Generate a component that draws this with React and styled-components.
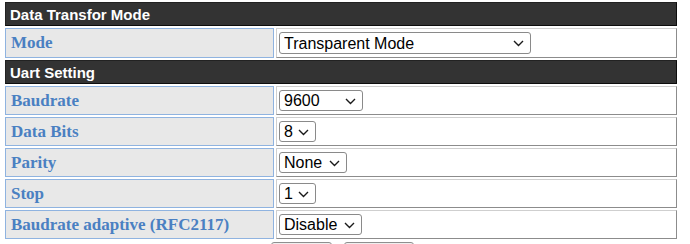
import React from 'react';
import styled, { createGlobalStyle } from 'styled-components';

const GlobalStyle = createGlobalStyle`
    html, body {
        margin: 0;
        padding: 0;
        background: #ffffff;
    }
`;

const Page = styled.div`
    padding: 2px 0 0 5px;
    width: 672px;
`;

const Grid = styled.div`
    display: grid;
    grid-template-columns: 269px 401px;
    gap: 2px;
`;

const Header = styled.div`
    grid-column: 1 / -1;
    box-sizing: border-box;
    height: 24px;
    display: flex;
    align-items: center;
    padding-left: 4px;
    background: #333333;
    border: 1px solid #222222;
    border-right-color: #0d0d0d;
    border-bottom-color: #0d0d0d;
    color: #ffffff;
    font-family: 'Liberation Sans', Arial, sans-serif;
    font-weight: bold;
    font-size: 15px;
`;

const Label = styled.div`
    box-sizing: border-box;
    height: ${(p) => p.$h}px;
    display: flex;
    align-items: center;
    padding-left: 5px;
    background: #e8e8e8;
    border: 1px solid #8fb3e0;
    color: #4a80c2;
    font-family: 'Liberation Serif', 'Times New Roman', serif;
    font-weight: bold;
    font-size: 17px;
`;

const Value = styled.div`
    box-sizing: border-box;
    height: ${(p) => p.$h}px;
    display: flex;
    align-items: center;
    padding-left: 2px;
    background: #ffffff;
    border: 1px solid #cfcfcf;
    border-right-color: #8c8c8c;
    border-bottom-color: #8c8c8c;
`;

const SelectWrap = styled.span`
    position: relative;
    display: inline-flex;
`;

const Select = styled.select`
    appearance: none;
    -webkit-appearance: none;
    box-sizing: border-box;
    width: ${(p) => p.$w}px;
    height: ${(p) => p.$sh || 21}px;
    padding: 0 18px 0 4px;
    font-family: 'Liberation Sans', Arial, sans-serif;
    font-size: 16px;
    color: #000000;
    background: #ffffff;
    border: 1px solid #8a8a8a;
    border-radius: 3px;
    margin: 0;
    outline: none;
`;

const Chevron = styled.svg`
    position: absolute;
    right: 7px;
    top: 50%;
    margin-top: -3px;
    pointer-events: none;
`;

const Buttons = styled.div`
    display: flex;
    justify-content: center;
    gap: 12px;
    margin-top: 3px;
    padding-left: 2px;
`;

const Button = styled.button`
    width: ${(p) => p.$w}px;
    height: 24px;
    background: #efefef;
    border: 1px solid #8f8f8f;
    border-radius: 3px;
`;

const Dropdown = ({ w, h, value, options }) => (
    <SelectWrap>
        <Select $w={w} $sh={h} defaultValue={value}>
            {options.map((o) => (
                <option key={o}>{o}</option>
            ))}
        </Select>
        <Chevron width='11' height='7' viewBox='0 0 11 7'>
            <path d='M1 1 L5.5 5.5 L10 1' fill='none' stroke='#1a1a1a' strokeWidth='1.4' />
        </Chevron>
    </SelectWrap>
);

const rows = [
    { label: 'Baudrate', w: 84, value: '9600', options: ['1200', '2400', '4800', '9600', '19200', '38400', '57600', '115200'] },
    { label: 'Data Bits', w: 37, value: '8', options: ['5', '6', '7', '8'] },
    { label: 'Parity', w: 68, value: 'None', options: ['None', 'Odd', 'Even'] },
    { label: 'Stop', w: 37, value: '1', options: ['1', '2'] },
    { label: 'Baudrate adaptive (RFC2117)', w: 83, value: 'Disable', options: ['Disable', 'Enable'] },
];

const App = () => {
    return (
        <Page>
            <GlobalStyle />
            <Grid>
                <Header>Data Transfor Mode</Header>
                <Label $h={30}>Mode</Label>
                <Value $h={30}>
                    <Dropdown
                        w={252}
                        h={22}
                        value='Transparent Mode'
                        options={['Transparent Mode', 'Modbus TCP', 'Httpd Client']}
                    />
                </Value>
                <Header>Uart Setting</Header>
                {rows.map((r) => (
                    <React.Fragment key={r.label}>
                        <Label $h={29}>{r.label}</Label>
                        <Value $h={29}>
                            <Dropdown w={r.w} value={r.value} options={r.options} />
                        </Value>
                    </React.Fragment>
                ))}
            </Grid>
            <Buttons>
                <Button $w={61} />
                <Button $w={70} />
            </Buttons>
        </Page>
    );
};

export default App;
